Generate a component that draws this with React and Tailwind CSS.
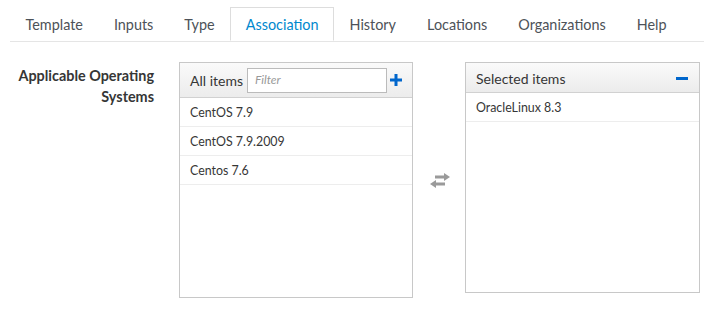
import React from 'react';

const tabs = ['Template', 'Inputs', 'Type', 'Association', 'History', 'Locations', 'Organizations', 'Help'];
const allItems = ['CentOS 7.9', 'CentOS 7.9.2009', 'Centos 7.6'];
const selected = ['OracleLinux 8.3'];

const ExchangeIcon = () => (
    <svg width="22" height="17" viewBox="0 0 22 17">
        <path d="M6 3.5 H15 V1 L21 5 L15 9 V6.5 H6 Z" fill="#9a9a9a" />
        <path d="M16 10.5 H7 V8 L1 12 L7 16 V13.5 H16 Z" fill="#9a9a9a" />
    </svg>
);

const App = () => {
    return (
        <div className="w-[704px] h-[311px] bg-white text-[#363636]" style={{ fontFamily: 'Lato, sans-serif' }}>
            {/* Tabs */}
            <div className="ml-[10px] pt-[7px] flex border-b border-[#e5e5e5]">
                {tabs.map((t) => (
                    <div
                        key={t}
                        className={
                            t === 'Association'
                                ? 'h-[34px] px-[14.5px] pt-[1px] flex items-center text-[14.4px] text-[#0088ce] border border-[#dddddd] border-b-white bg-white -mb-px'
                                : 'h-[34px] px-[15.5px] pt-[1px] flex items-center text-[14.4px] text-[#4d5258]'
                        }
                    >
                        {t}
                    </div>
                ))}
            </div>

            {/* Association form */}
            <div className="flex mt-[20px]">
                <div className="w-[154px] text-right font-bold text-[14.4px] leading-[21px] pt-[3px] text-[#363636]">
                    Applicable Operating Systems
                </div>

                {/* All items */}
                <div className="ml-[25px] w-[234px] border border-[#c8c8c8]">
                    <div className="h-[35px] flex items-center pl-[10px] pr-[11px] bg-gradient-to-b from-[#fafafa] to-[#ececec] border-b border-[#d1d1d1]">
                        <span className="text-[14px] text-[#363636] mr-[4px] whitespace-nowrap shrink-0">All items</span>
                        <div className="w-[140px] h-[25px] shrink-0 border border-[#bbbbbb] bg-white flex items-center pl-[7px]">
                            <span className="text-[12px] italic text-[#999]">Filter</span>
                        </div>
                        <svg className="ml-[3px] shrink-0" width="12" height="12" viewBox="0 0 12 12">
                            <rect x="4.5" y="0" width="3" height="12" fill="#0066cc" />
                            <rect x="0" y="4.5" width="12" height="3" fill="#0066cc" />
                        </svg>
                    </div>
                    <div className="h-[199px]">
                        {allItems.map((it) => (
                            <div key={it} className="h-[29px] flex items-center px-[10px] pt-[3px] text-[12.4px] text-[#363636] border-b border-[#ededed]">
                                {it}
                            </div>
                        ))}
                    </div>
                </div>

                {/* Transfer icon */}
                <div className="w-[52px] flex items-center justify-center pl-[2px]">
                    <ExchangeIcon />
                </div>

                {/* Selected items */}
                <div className="w-[235px] self-start border border-[#c8c8c8]">
                    <div className="h-[30px] flex items-center justify-between pl-[10px] pr-[11px] pt-[1px] bg-gradient-to-b from-[#fafafa] to-[#ececec] border-b border-[#d1d1d1]">
                        <span className="text-[14px] text-[#363636]">Selected items</span>
                        <div className="w-[12px] h-[3px] bg-[#0066cc]" />
                    </div>
                    <div className="h-[199px]">
                        {selected.map((it) => (
                            <div key={it} className="h-[29px] flex items-center px-[10px] pt-[3px] text-[12.4px] text-[#363636] border-b border-[#ededed]">
                                {it}
                            </div>
                        ))}
                    </div>
                </div>
            </div>
        </div>
    );
};

export default App;
